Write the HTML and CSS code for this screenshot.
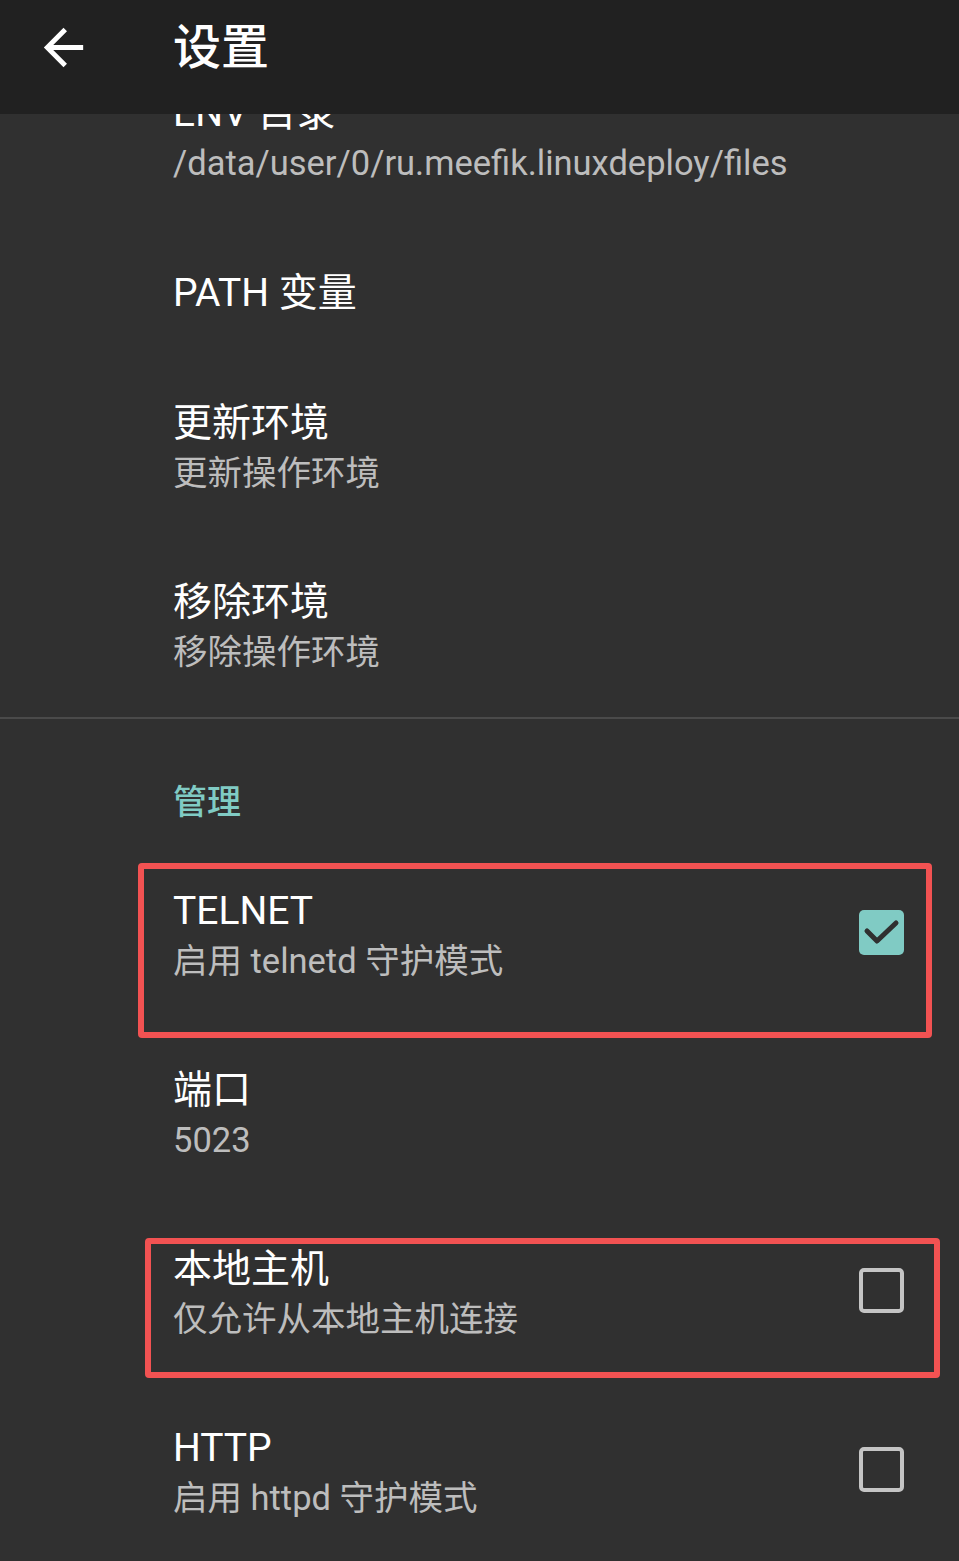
FILE: index.html
```html
<!DOCTYPE html>
<html lang="zh-CN">
<head>
    <meta charset="UTF-8">
    <meta name="viewport" content="width=device-width, initial-scale=1.0">
    <title>设置</title>
    <link rel="stylesheet" href="styles.css">
</head>
<body>
    <header class="app-bar">
        <svg class="back-icon" viewBox="0 0 24 24" aria-hidden="true">
            <path d="M20 11H7.83l5.59-5.59L12 4l-8 8 8 8 1.41-1.41L7.83 13H20v-2z"/>
        </svg>
        <h1 class="app-title">设置</h1>
    </header>

    <main class="pref-list">
        <div class="pref-item">
            <div class="pref-text">
                <div class="pref-title">ENV 目录</div>
                <div class="pref-summary">/data/user/0/ru.meefik.linuxdeploy/files</div>
            </div>
        </div>

        <div class="pref-item single">
            <div class="pref-text">
                <div class="pref-title">PATH 变量</div>
            </div>
        </div>

        <div class="pref-item">
            <div class="pref-text">
                <div class="pref-title">更新环境</div>
                <div class="pref-summary">更新操作环境</div>
            </div>
        </div>

        <div class="pref-item">
            <div class="pref-text">
                <div class="pref-title">移除环境</div>
                <div class="pref-summary">移除操作环境</div>
            </div>
        </div>

        <div class="divider"></div>

        <div class="pref-category">管理</div>

        <div class="pref-item">
            <div class="pref-text">
                <div class="pref-title">TELNET</div>
                <div class="pref-summary">启用 telnetd 守护模式</div>
            </div>
            <span class="checkbox checked">
                <svg viewBox="0 0 45 45" aria-hidden="true"><path d="M8 21l10 10 19-18"/></svg>
            </span>
            <div class="mark mark-telnet"></div>
        </div>

        <div class="pref-item">
            <div class="pref-text">
                <div class="pref-title">端口</div>
                <div class="pref-summary">5023</div>
            </div>
        </div>

        <div class="pref-item">
            <div class="pref-text">
                <div class="pref-title">本地主机</div>
                <div class="pref-summary">仅允许从本地主机连接</div>
            </div>
            <span class="checkbox"></span>
            <div class="mark mark-localhost"></div>
        </div>

        <div class="pref-item">
            <div class="pref-text">
                <div class="pref-title">HTTP</div>
                <div class="pref-summary">启用 httpd 守护模式</div>
            </div>
            <span class="checkbox"></span>
        </div>
    </main>
</body>
</html>
```

FILE: styles.css
```css
body {
    margin: 0;
    background-color: #303030;
    font-family: Roboto, "Noto Sans CJK SC", sans-serif;
    color: #fff;
    overflow: hidden;
}

/* Top app bar sits over the scrolled list */
.app-bar {
    position: relative;
    z-index: 2;
    height: 114px;
    background-color: #212121;
    display: flex;
    align-items: center;
}

.back-icon {
    width: 59px;
    height: 59px;
    margin-left: 34px;
    margin-top: -20px;
    fill: #fff;
}

.app-title {
    margin: -18px 0 0 80px;
    font-size: 48px;
    font-weight: 500;
    line-height: 1;
}

/* list is scrolled so the first item is partly under the bar */
.pref-list {
    margin-top: -65.5px;
}

.pref-item {
    position: relative;
    height: 179px;
    padding: 0 55px 0 173px;
    display: flex;
    align-items: center;
    box-sizing: border-box;
}

.pref-item.single {
    height: 131px;
}

.pref-text {
    flex: 1;
}

.pref-title {
    font-size: 39px;
    line-height: 50px;
    color: #fff;
}

.pref-summary {
    font-size: 34.5px;
    line-height: 50px;
    color: #bdbdbd;
}

.divider {
    height: 2px;
    background-color: #4a4a4a;
}

.pref-category {
    height: 127.5px;
    padding: 58px 0 0 173px;
    box-sizing: border-box;
    font-size: 34px;
    line-height: 50px;
    font-weight: 500;
    color: #80cbc4;
}

.checkbox {
    width: 45px;
    height: 45px;
    margin-bottom: 6px;
    box-sizing: border-box;
    border: 4px solid #c4c4c4;
    border-radius: 5px;
    flex-shrink: 0;
}

.checkbox.checked {
    border: none;
    background-color: #80cbc4;
}

.checkbox svg {
    display: block;
    width: 45px;
    height: 45px;
    fill: none;
    stroke: #303030;
    stroke-width: 5;
    stroke-linecap: round;
    stroke-linejoin: round;
}

/* red annotation frames drawn over the rows */
.mark {
    position: absolute;
    z-index: 1;
    border: 6px solid #f25252;
    border-radius: 4px;
    box-sizing: border-box;
    pointer-events: none;
}

.mark-telnet {
    left: 138px;
    top: 16.5px;
    width: 794px;
    height: 175px;
}

.mark-localhost {
    left: 145px;
    top: 33.5px;
    width: 795px;
    height: 140px;
}
```
